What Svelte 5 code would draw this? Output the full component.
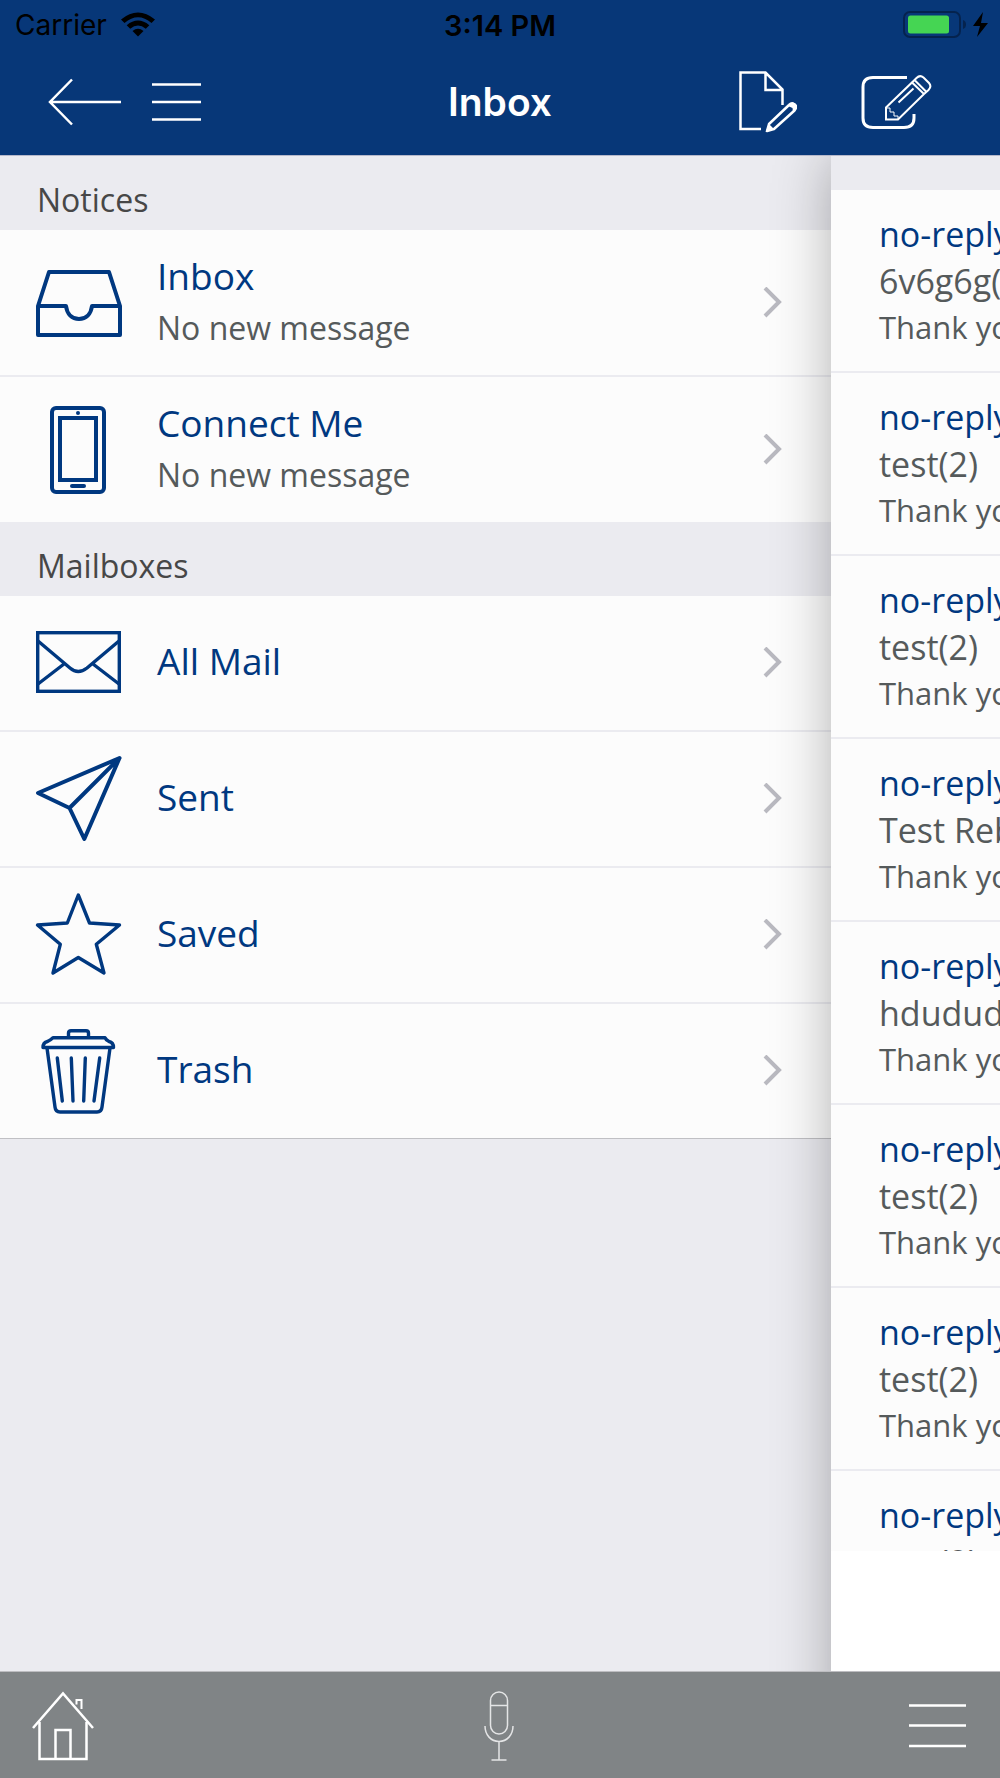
<script lang="ts">
	const notices = [
		{ icon: 'inbox', title: 'Inbox', note: 'No new message' },
		{ icon: 'phone', title: 'Connect Me', note: 'No new message' }
	];

	const mailboxes = [
		{ icon: 'mail', title: 'All Mail' },
		{ icon: 'sent', title: 'Sent' },
		{ icon: 'star', title: 'Saved' },
		{ icon: 'trash', title: 'Trash' }
	];

	const subjects = ['6v6g6g(2)', 'test(2)', 'test(2)', 'Test Reb', 'hdududu', 'test(2)', 'test(2)', 'test(2)'];
	const messages = subjects.map((subject) => ({ from: 'no-reply', subject, preview: 'Thank you' }));
</script>

{#snippet rowIcon(name: string)}
	<svg class="row-icon" viewBox="0 0 88 88" aria-hidden="true">
		{#if name === 'inbox'}
			<path d="M3 47 14 13H74L85 47V76H3ZM3 47H31C32 55 37 60 44 60S56 55 57 47H85" />
		{:else if name === 'phone'}
			<rect x="17" y="2" width="52" height="84" rx="4" />
			<rect class="sharp" x="25" y="12" width="36" height="62" />
			<circle class="dot" cx="43" cy="7" r="2" />
			<path d="M37 80H49" />
		{:else if name === 'mail'}
			<rect class="thin" x="2.7" y="13.7" width="81.6" height="58.6" />
			<path class="thin" d="M3 22 35 49Q43 56 52 49L84 22M3 65 29 45M84 65 58 45" />
		{:else if name === 'sent'}
			<path d="M84.5 3 3 38 34.5 53 49.3 84ZM84.5 3 34.5 53" />
		{:else if name === 'star'}
			<path
				class="thin"
				d="M43.3 4 54.5 32 84.5 34 61.3 53.3 69 82 43.3 66.5 18 82 25.3 53.3 2.5 34 32.3 32Z"
			/>
		{:else if name === 'trash'}
			<path
				class="thin"
				d="M33.5 10V6Q33.5 3.7 36 3.7H51Q53.5 3.7 53.5 6V10M18 10.7H70Q71 13 74 14.5Q78.5 15.5 78.5 20.5H8Q8 15.5 12.5 14.5Q15.5 13 18 10.7"
			/>
			<path
				class="thin"
				d="M12 21 20 80Q20.5 85 25 85H62Q66.5 85 67 80L75 21M22.3 31 27.3 74M36.3 31 38 74M50.3 31 48.7 74M64.7 31 59 74"
			/>
		{/if}
	</svg>
{/snippet}

{#snippet chevron()}
	<svg class="chevron" viewBox="0 0 20 32" aria-hidden="true"><path d="M2 1 16 15 2 29" /></svg>
{/snippet}

<div class="app">
	<header class="top">
		<div class="status">
			<div class="carrier">
				<span>Carrier</span>
				<svg width="34" height="26" viewBox="0 0 34 26" aria-hidden="true">
					<path d="M0 7.5Q17-6.5 34 7.5L30.5 11Q17-.5 3.5 11Z" />
					<path d="M5.7 13.2Q17 4 28.3 13.2L24.8 16.7Q17 10.5 9.2 16.7Z" />
					<path d="M11.5 19Q17 14.7 22.5 19L17 24.5Z" />
				</svg>
			</div>
			<time>3:14 PM</time>
			<div class="power">
				<svg width="86" height="28" viewBox="0 0 86 28" aria-hidden="true">
					<rect x="1" y="1" width="56" height="25" rx="6" fill="none" stroke="#05234e" stroke-width="2" />
					<rect x="5" y="4.500" width="41" height="18" rx="2.500" fill="#45d553" />
					<path d="M60 9Q63 10 63 13.500T60 18Z" fill="#05234e" />
					<path d="M80 1 70 15H77L74 26 85 12H78Z" />
				</svg>
			</div>
		</div>
		<nav class="bar">
			<div class="left">
				<button aria-label="Back">
					<svg width="73" height="48" viewBox="0 0 73 48"><path d="M24 1.500 2 24 24 46.500M2 24H73" /></svg>
				</button>
				<button aria-label="Mailboxes">
					<svg width="49" height="38" viewBox="0 0 49 38"><path d="M0 1.500H49M0 19H49M0 36.500H49" /></svg>
				</button>
			</div>
			<h1>Inbox</h1>
			<div class="right">
				<button aria-label="New note">
					<svg width="58" height="62" viewBox="0 0 58 62">
						<path d="M22 58H1.500V1.500H26.500L43.500 18.500V34M26.500 1.500V19H43.500" />
						<path class="pen" d="M30 53 50 34Q53 31 55.500 33.500T55.500 39.500L35 58 28 60Z" />
						<path class="solid" d="M30 53 35 58 26.500 61ZM49 35Q53 29 57 33T54 41L53.500 37Z" />
					</svg>
				</button>
				<button aria-label="Compose">
					<svg width="71" height="56" viewBox="0 0 71 56">
						<path class="frame" d="M46 3.500H12Q2 3.500 2 13V44Q2 53.500 12 53.500H43Q53 53.500 53 44V40" />
						<path class="pencil" d="M25 33.500 51 8.500 63 20 37 45.500H25ZM51 8.500 55.500 4Q59 .500 62.500 3.500L68 9Q71 12.500 67.500 16L63 20M53.500 6 65.500 18M37.500 28.500 52.500 14.500" />
						<path class="fine" d="M25 34H29V38H33V42H37V45" />
					</svg>
				</button>
			</div>
		</nav>
	</header>

	<main>
		<section class="drawer">
			<h2>Notices</h2>
			<ul class="notices">
				{#each notices as item}
					<li>
						<a href="#{item.icon}">
							{@render rowIcon(item.icon)}
							<span class="label">
								<span class="title">{item.title}</span>
								<span class="note">{item.note}</span>
							</span>
							{@render chevron()}
						</a>
					</li>
				{/each}
			</ul>
			<h2>Mailboxes</h2>
			<ul class="mailboxes">
				{#each mailboxes as item}
					<li>
						<a href="#{item.icon}">
							{@render rowIcon(item.icon)}
							<span class="label"><span class="title">{item.title}</span></span>
							{@render chevron()}
						</a>
					</li>
				{/each}
			</ul>
		</section>

		<section class="messages" aria-label="Messages">
			<ul>
				{#each messages as message}
					<li>
						<p class="from">{message.from}</p>
						<p class="subject">{message.subject}</p>
						<p class="preview">{message.preview}</p>
					</li>
				{/each}
			</ul>
		</section>
	</main>

	<footer>
		<button aria-label="Home">
			<svg width="62" height="70" viewBox="0 0 62 70">
				<path d="M1 37 31 2.500 61 37" />
				<path d="M7.500 31V68H54.500V31M23.500 68V39H38.500V68" />
				<path class="flue" d="M44.500 13.500V9H49.500V18" />
			</svg>
		</button>
		<button aria-label="Voice">
			<svg class="mic" width="30" height="70" viewBox="0 0 30 70">
				<rect x="6.500" y="1" width="17" height="42" rx="8.500" />
				<path d="M6.500 14.500H23.500M1 35C1 44 7 50.500 15 50.500S29 44 29 35M15 50.500V69M7.500 69H22.500" />
			</svg>
		</button>
		<button aria-label="Menu">
			<svg width="57" height="44" viewBox="0 0 57 44"><path d="M0 1.500H57M0 21.500H57M0 42H57" /></svg>
		</button>
	</footer>
</div>

<style>
	:global(body) {
		margin: 0;
	}

	.app {
		display: flex;
		flex-direction: column;
		height: 100vh;
		font-family: 'Open Sans', 'Noto Sans', sans-serif;
		background: #ebebf0;
	}

	h1,
	h2,
	p,
	ul {
		margin: 0;
		padding: 0;
		font-weight: 400;
		list-style: none;
	}

	button {
		display: flex;
		padding: 0;
		border: 0;
		background: none;
		cursor: pointer;
	}

	/* status bar and navigation */
	.top {
		position: relative;
		z-index: 2;
		flex: none;
		background: #073778;
		border-bottom: 1px solid #b5b8cb;
		font-family: Inter, 'Liberation Sans', sans-serif;
	}

	.status,
	.bar {
		display: grid;
		grid-template-columns: 1fr auto 1fr;
		align-items: center;
	}

	.status {
		height: 50px;
		font-size: 28px;
		color: #000;
	}

	.carrier {
		display: flex;
		align-items: center;
		gap: 14px;
		padding-left: 15px;
	}

	time {
		font-size: 29px;
		font-weight: 600;
	}

	.power {
		display: flex;
		justify-content: flex-end;
		padding-right: 11px;
	}

	.bar {
		box-sizing: border-box;
		height: 105px;
		padding-bottom: 2px;
	}

	.bar svg {
		fill: none;
		stroke: #fff;
		stroke-width: 2.5;
	}

	.bar .frame {
		stroke-width: 3;
	}

	.bar .pencil {
		stroke-width: 2;
	}

	.bar .pen {
		stroke-linejoin: round;
	}

	.bar .fine {
		stroke-width: 1;
	}

	.bar .solid {
		fill: #fff;
		stroke: none;
	}

	.left,
	.right {
		display: flex;
		align-items: center;
	}

	.left {
		gap: 31px;
		padding-left: 48px;
	}

	.right {
		justify-content: flex-end;
		gap: 64px;
		padding-right: 68px;
	}

	h1 {
		font-size: 39px;
		font-weight: 600;
		color: #fff;
	}

	main {
		display: flex;
		flex: 1;
		min-height: 0;
	}

	/* drawer */
	.drawer {
		flex: 1;
		min-width: 0;
		overflow-y: auto;
		scrollbar-width: none;
	}

	h2 {
		padding: 21px 37px 7px;
		font-size: 32px;
		line-height: 46px;
		color: #474747;
	}

	.drawer li {
		background: #fcfcfc;
		border-bottom: 2px solid #ebebf0;
	}

	.drawer .notices li:last-child {
		border-bottom: 0;
	}

	.drawer .mailboxes li:last-child {
		border-bottom: 1px solid #c0c0c4;
	}

	.drawer a {
		display: flex;
		align-items: center;
		gap: 34px;
		min-height: 134px;
		padding: 0 48px 0 35px;
		color: #003880;
		text-decoration: none;
	}

	.drawer .notices a {
		min-height: 145px;
	}

	.row-icon {
		flex: none;
		width: 88px;
		height: 88px;
		fill: none;
		stroke: #003880;
		stroke-width: 4;
		stroke-linejoin: round;
		stroke-linecap: round;
	}

	.row-icon .thin {
		stroke-width: 3.4;
	}

	.row-icon .sharp,
	.row-icon rect.thin {
		stroke-linejoin: miter;
	}

	.row-icon .dot {
		fill: #003880;
		stroke: none;
	}

	.label {
		display: flex;
		flex: 1;
		flex-direction: column;
	}

	.mailboxes .label {
		padding-bottom: 4px;
	}

	.title {
		font-size: 37px;
		font-weight: 500;
		line-height: 50px;
	}

	.note {
		font-size: 32px;
		line-height: 54px;
		color: #555a5b;
	}

	.chevron {
		flex: none;
		width: 20px;
		height: 32px;
		fill: none;
		stroke: #b9b9c0;
		stroke-width: 4;
	}

	/* message list pushed aside by the drawer; runs on under the footer so its shadow stays even */
	.messages {
		position: relative;
		z-index: 1;
		display: flex;
		flex: none;
		flex-direction: column;
		box-sizing: border-box;
		width: 16.9%;
		margin-bottom: -60px;
		padding-bottom: 180px;
		background: #fff;
		box-shadow: 0 0 54px rgba(0, 0, 0, 0.3);
	}

	.messages ul {
		flex: 1;
		min-height: 0;
		border-top: 34px solid #ebebf0;
		overflow-x: hidden;
		overflow-y: auto;
		scrollbar-width: none;
	}

	.messages li {
		padding: 21px 0 21px 48px;
		background: #fcfcfc;
		border-bottom: 2px solid #ebebf0;
		white-space: nowrap;
		overflow: hidden;
	}

	.from,
	.subject {
		font-size: 34px;
		line-height: 47px;
	}

	.from {
		font-weight: 500;
		color: #003880;
	}

	.subject,
	.preview {
		color: #555a5b;
	}

	.preview {
		font-size: 31px;
		line-height: 45px;
	}

	footer {
		position: relative;
		z-index: 2;
		display: grid;
		grid-template-columns: 1fr auto 1fr;
		flex: none;
		align-items: center;
		box-sizing: border-box;
		height: 107px;
		padding: 2px 34px 0 32px;
		background: #808486;
		border-top: 1px solid #bdbdc1;
	}

	footer button:last-child {
		justify-self: end;
	}

	footer svg {
		fill: none;
		stroke: #fff;
		stroke-width: 2.5;
	}

	footer .flue {
		stroke-width: 2;
	}

	footer .mic {
		stroke: #e4e5e6;
		stroke-width: 1.5;
	}
</style>
